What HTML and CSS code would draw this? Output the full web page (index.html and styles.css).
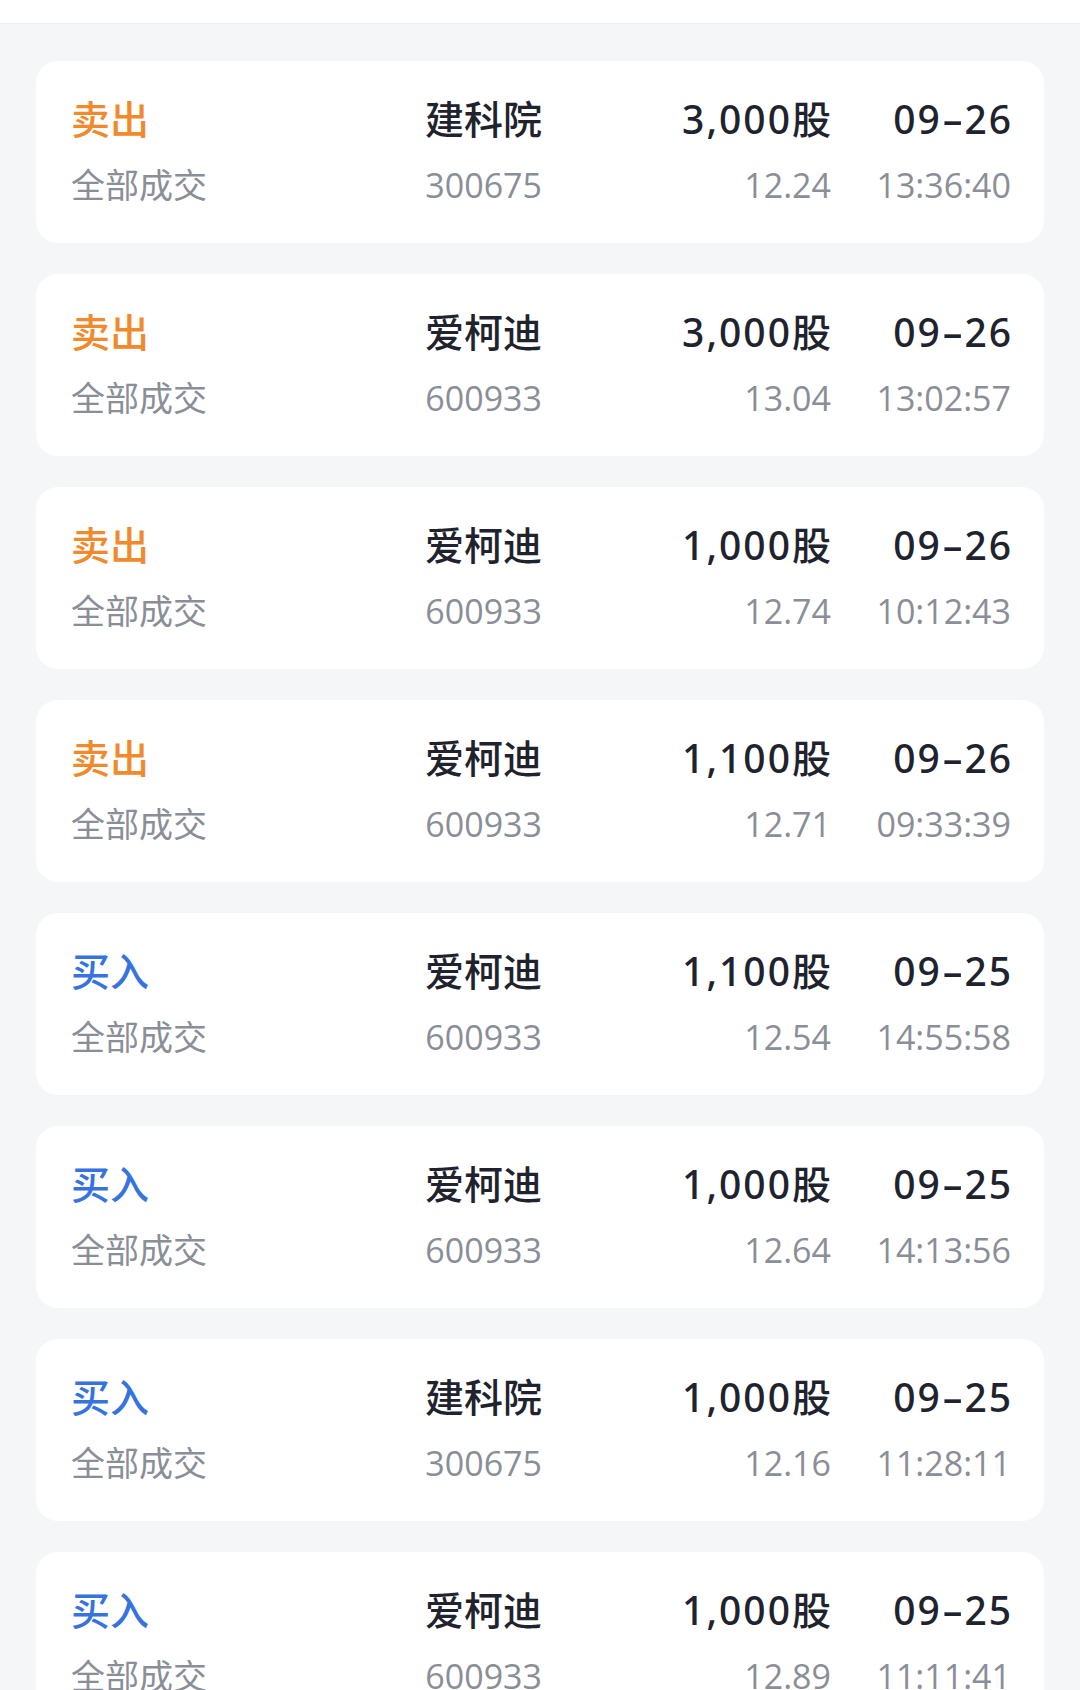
FILE: index.html
```html
<!DOCTYPE html>
<html lang="zh-CN">
<head>
<meta charset="utf-8">
<title>成交记录</title>
<link rel="stylesheet" href="styles.css">
</head>
<body>
<header class="topbar"></header>
<main class="list">
  <div class="card">
    <div class="c1 main sell">卖出</div><div class="c2 main">建科院</div><div class="c3 main num">3,000股</div><div class="c4 main num">09<span class="dash">-</span>26</div>
    <div class="c1 sub">全部成交</div><div class="c2 sub">300675</div><div class="c3 sub">12.24</div><div class="c4 sub">13:36:40</div>
  </div>
  <div class="card">
    <div class="c1 main sell">卖出</div><div class="c2 main">爱柯迪</div><div class="c3 main num">3,000股</div><div class="c4 main num">09<span class="dash">-</span>26</div>
    <div class="c1 sub">全部成交</div><div class="c2 sub">600933</div><div class="c3 sub">13.04</div><div class="c4 sub">13:02:57</div>
  </div>
  <div class="card">
    <div class="c1 main sell">卖出</div><div class="c2 main">爱柯迪</div><div class="c3 main num">1,000股</div><div class="c4 main num">09<span class="dash">-</span>26</div>
    <div class="c1 sub">全部成交</div><div class="c2 sub">600933</div><div class="c3 sub">12.74</div><div class="c4 sub">10:12:43</div>
  </div>
  <div class="card">
    <div class="c1 main sell">卖出</div><div class="c2 main">爱柯迪</div><div class="c3 main num">1,100股</div><div class="c4 main num">09<span class="dash">-</span>26</div>
    <div class="c1 sub">全部成交</div><div class="c2 sub">600933</div><div class="c3 sub">12.71</div><div class="c4 sub">09:33:39</div>
  </div>
  <div class="card">
    <div class="c1 main buy">买入</div><div class="c2 main">爱柯迪</div><div class="c3 main num">1,100股</div><div class="c4 main num">09<span class="dash">-</span>25</div>
    <div class="c1 sub">全部成交</div><div class="c2 sub">600933</div><div class="c3 sub">12.54</div><div class="c4 sub">14:55:58</div>
  </div>
  <div class="card">
    <div class="c1 main buy">买入</div><div class="c2 main">爱柯迪</div><div class="c3 main num">1,000股</div><div class="c4 main num">09<span class="dash">-</span>25</div>
    <div class="c1 sub">全部成交</div><div class="c2 sub">600933</div><div class="c3 sub">12.64</div><div class="c4 sub">14:13:56</div>
  </div>
  <div class="card">
    <div class="c1 main buy">买入</div><div class="c2 main">建科院</div><div class="c3 main num">1,000股</div><div class="c4 main num">09<span class="dash">-</span>25</div>
    <div class="c1 sub">全部成交</div><div class="c2 sub">300675</div><div class="c3 sub">12.16</div><div class="c4 sub">11:28:11</div>
  </div>
  <div class="card">
    <div class="c1 main buy">买入</div><div class="c2 main">爱柯迪</div><div class="c3 main num">1,000股</div><div class="c4 main num">09<span class="dash">-</span>25</div>
    <div class="c1 sub">全部成交</div><div class="c2 sub">600933</div><div class="c3 sub">12.89</div><div class="c4 sub">11:11:41</div>
  </div>
</main>
</body>
</html>
```
FILE: styles.css
```css
html, body {
  margin: 0;
  padding: 0;
  background: #f5f6f8;
  font-family: "Open Sans", "Noto Sans CJK SC", sans-serif;
}
.topbar {
  height: 23px;
  background: #ffffff;
  border-bottom: 1px solid #eceef1;
}
.list {
  display: flex;
  flex-direction: column;
  gap: 31px;
  padding: 37px 36px 40px;
}
.card {
  background: #ffffff;
  border-radius: 22px;
  height: 182px;
  box-sizing: border-box;
  padding: 26px 34px 28px 35px;
  display: grid;
  grid-template-columns: 310px 161px 289px 180px;
  grid-template-rows: 64px 64px;
  align-items: center;
}
.main {
  font-size: 39px;
  font-weight: 500;
  color: #20232d;
  line-height: 64px;
  white-space: nowrap;
}
.num {
  font-family: "Noto Sans", "Noto Sans CJK SC", sans-serif;
  font-weight: 500;
  letter-spacing: 2px;
  margin-right: -2px;
}
.dash {
  display: inline-block;
  margin: 0 3px 0 5px;
  transform: scaleX(1.7);
}
.sub {
  font-size: 34px;
  font-weight: 400;
  color: #8a8e97;
  line-height: 64px;
  padding-top: 4px;
  white-space: nowrap;
}
.c2, .c3, .c4 { text-align: right; }
.sell { color: #f08a2c; }
.buy { color: #3673de; }
```
